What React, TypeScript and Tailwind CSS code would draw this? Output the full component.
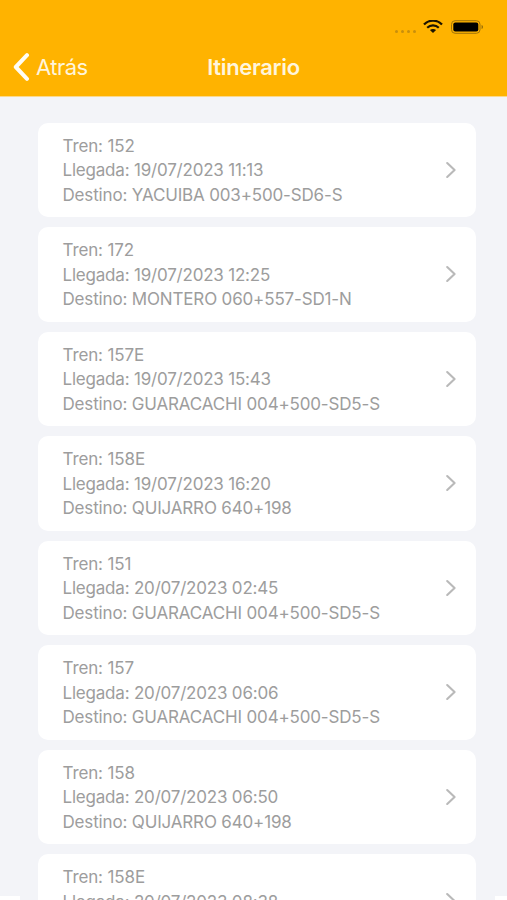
type Train = {
  id: string;
  arrival: string;
  destination: string;
};

const TRAINS: Train[] = [
  { id: "152", arrival: "19/07/2023 11:13", destination: "YACUIBA 003+500-SD6-S" },
  { id: "172", arrival: "19/07/2023 12:25", destination: "MONTERO 060+557-SD1-N" },
  { id: "157E", arrival: "19/07/2023 15:43", destination: "GUARACACHI 004+500-SD5-S" },
  { id: "158E", arrival: "19/07/2023 16:20", destination: "QUIJARRO 640+198" },
  { id: "151", arrival: "20/07/2023 02:45", destination: "GUARACACHI 004+500-SD5-S" },
  { id: "157", arrival: "20/07/2023 06:06", destination: "GUARACACHI 004+500-SD5-S" },
  { id: "158", arrival: "20/07/2023 06:50", destination: "QUIJARRO 640+198" },
  { id: "158E", arrival: "20/07/2023 08:38", destination: "QUIJARRO 640+198" },
];

function StatusBar() {
  return (
    <div className="flex h-[37px] items-start justify-end pr-[23px] pt-5">
      {/* No signal */}
      <div className="mr-[7px] mt-[10px] flex gap-[3px]">
        {[0, 1, 2, 3].map((i) => (
          <span key={i} className="h-[3px] w-[3px] rounded-full bg-[#c98f0c]" />
        ))}
      </div>
      {/* Wifi */}
      <svg className="mr-2" width="20" height="14" viewBox="0 0 20 14" fill="none">
        <path d="M1 4.5C6 -0.6 14 -0.6 19 4.5" stroke="#1c1400" strokeWidth="2.3" />
        <path d="M4.2 7.8C7.4 4.6 12.6 4.6 15.8 7.8" stroke="#1c1400" strokeWidth="2.2" />
        <path d="M10 13L6.9 10.1C8.6 8.5 11.4 8.5 13.1 10.1Z" fill="#1c1400" />
      </svg>
      {/* Battery */}
      <svg width="33" height="14" viewBox="0 0 33 14" fill="none">
        <rect x="0.5" y="0.7" width="28.5" height="12.6" rx="3.6" stroke="#a0740a" />
        <rect x="2.3" y="2.6" width="25" height="8.8" rx="2" fill="#000" />
        <path d="M30.6 5C32.3 5.5 32.3 8.5 30.6 9Z" fill="#8a6408" />
      </svg>
    </div>
  );
}

function Header() {
  return (
    <header className="h-[97px] shrink-0 border-b border-[#fbd98c] bg-[#ffb300]">
      <StatusBar />
      <div className="grid h-[60px] grid-cols-3 items-center">
        <button className="flex items-center gap-[6px] pl-[13px] text-left text-[22px] tracking-[-0.5px] text-[#fff5dc]">
          <svg width="17" height="28" viewBox="0 0 17 28" fill="none">
            <path
              d="M14 2.2L2.8 14L14 25.8"
              stroke="#fffdf5"
              strokeWidth="4"
              strokeLinecap="round"
              strokeLinejoin="round"
            />
          </svg>
          Atrás
        </button>
        <h1 className="text-center text-[22px] font-semibold tracking-[-0.3px] text-[#fff5dc]">
          Itinerario
        </h1>
      </div>
    </header>
  );
}

function TrainCard({ train }: { train: Train }) {
  return (
    <li className="flex h-[94.5px] shrink-0 items-center justify-between rounded-[10px] bg-white pl-[24.5px] pr-[19px]">
      <div className="whitespace-nowrap pt-[1.5px] text-[17px] leading-[24.4px] text-[#9d9d9d]">
        <p className="tracking-[-0.12px]">Tren: {train.id}</p>
        <p className="tracking-[-0.2px]">Llegada: {train.arrival}</p>
        <p className="tracking-[-0.16px]">Destino: {train.destination}</p>
      </div>
      <svg width="12" height="18" viewBox="0 0 12 18" fill="none">
        <path
          d="M2.2 2L9.6 9L2.2 16"
          stroke="#b9b9b9"
          strokeWidth="2.1"
          strokeLinecap="round"
          strokeLinejoin="round"
        />
      </svg>
    </li>
  );
}

export default function App() {
  return (
    <div className="relative flex h-[900px] w-full flex-col overflow-hidden bg-[#f3f4f8] font-['Inter',sans-serif]">
      <Header />
      <ul className="flex flex-col gap-[10px] pl-[38px] pr-[31.5px] pt-[25.5px]">
        {TRAINS.map((train, i) => (
          <TrainCard key={i} train={train} />
        ))}
      </ul>
      {/* Edges of the sheet below the list */}
      <div className="absolute bottom-0 left-0 h-1 w-5 bg-white" />
      <div className="absolute bottom-0 right-0 h-1 w-3 bg-white" />
    </div>
  );
}
